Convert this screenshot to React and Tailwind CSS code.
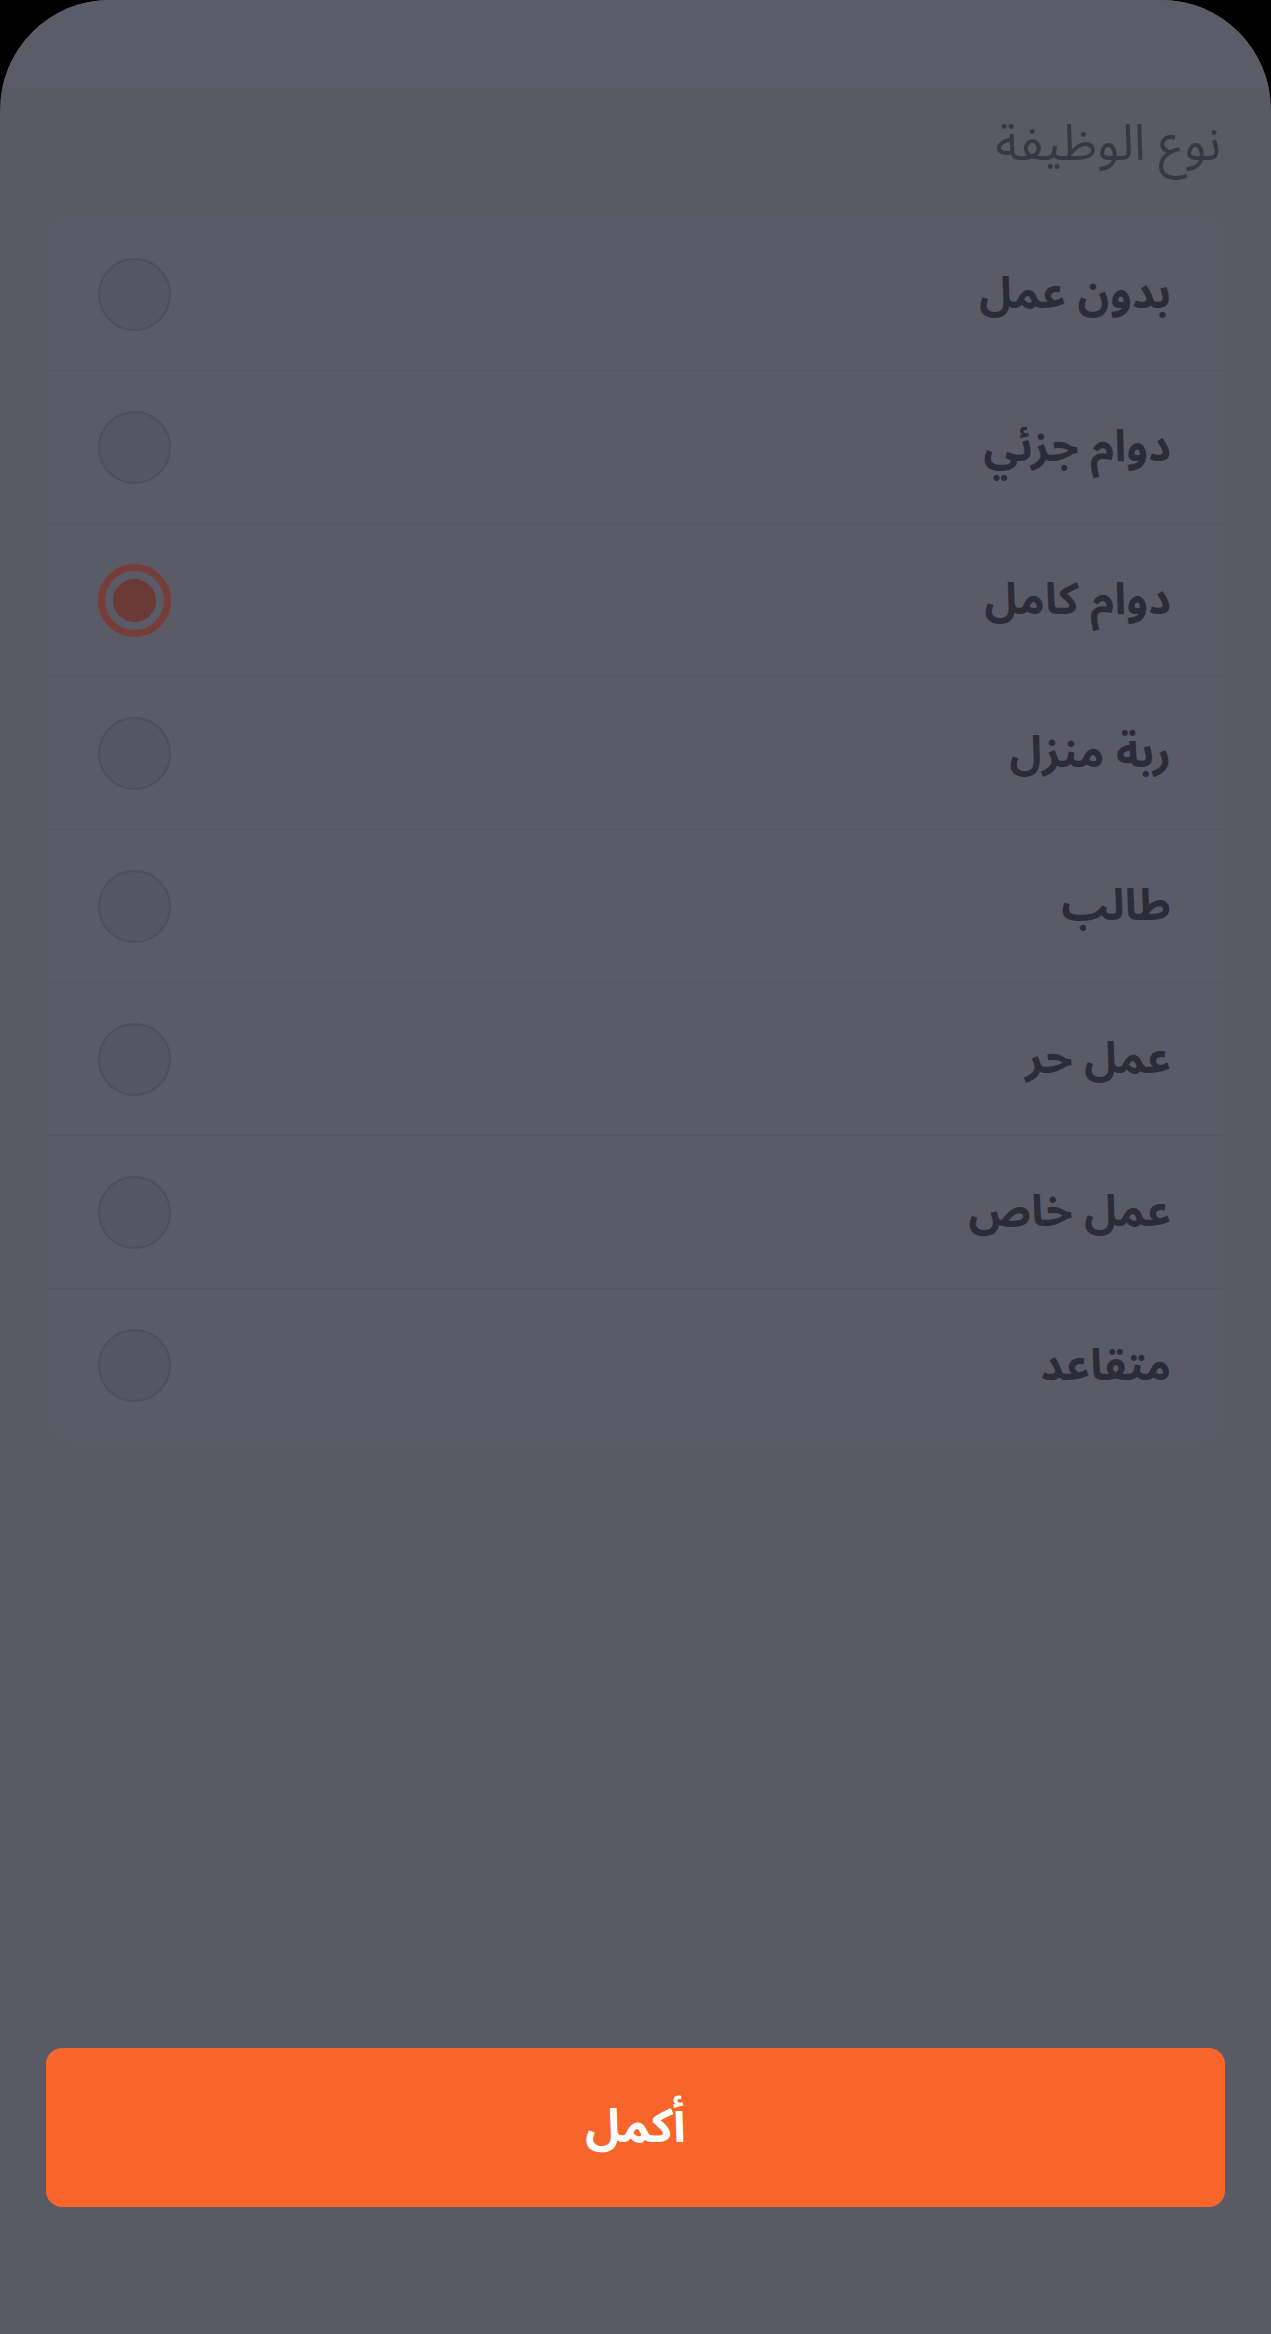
import { useState } from 'react';

const options = [
  'بدون عمل',
  'دوام جزئي',
  'دوام كامل',
  'ربة منزل',
  'طالب',
  'عمل حر',
  'عمل خاص',
  'متقاعد',
];

export default function App() {
  const [selected, setSelected] = useState(2);

  return (
    <div
      className="w-[1271px] h-[2334px] bg-black"
      style={{ fontFamily: '"Noto Sans Arabic", "Noto Sans", "DejaVu Sans", sans-serif' }}
    >
      <div dir="rtl" className="h-full bg-[#5a5a65] rounded-t-[110px] flex flex-col overflow-hidden">
        {/* top strip */}
        <div className="h-[87px] bg-[#5c5c68] shrink-0" />

        {/* Title */}
        <h1 className="mr-[50px] mt-[24px] text-[50px] leading-[66px] font-normal text-[#383845]">
          نوع الوظيفة
        </h1>

        {/* Options */}
        <div className="mt-[41px] mx-[48px] bg-[#5b5b67] rounded-[20px]">
          {options.map((item, index) => (
            <button
              key={index}
              onClick={() => setSelected(index)}
              className={`w-full h-[153px] flex items-center justify-between pr-[52px] pl-[50px] ${
                index < options.length - 1 ? 'border-b border-[#565662]' : ''
              }`}
            >
              <span className="text-[44px] font-bold text-[#2c2c38]">{item}</span>
              {selected === index ? (
                <span className="w-[73px] h-[73px] rounded-full border-[7px] border-[#773e39] flex items-center justify-center">
                  <span className="w-[43px] h-[43px] rounded-full bg-[#6b3936]" />
                </span>
              ) : (
                <span className="w-[73px] h-[73px] rounded-full border-2 border-[#4f4f5b] bg-[#575763]" />
              )}
            </button>
          ))}
        </div>

        <div className="flex-1" />

        {/* Continue button */}
        <div className="px-[46px] mb-[127px]">
          <button className="w-full h-[159px] rounded-[16px] bg-[#f8652a] text-white text-[47px] font-bold">
            أكمل
          </button>
        </div>
      </div>
    </div>
  );
}
